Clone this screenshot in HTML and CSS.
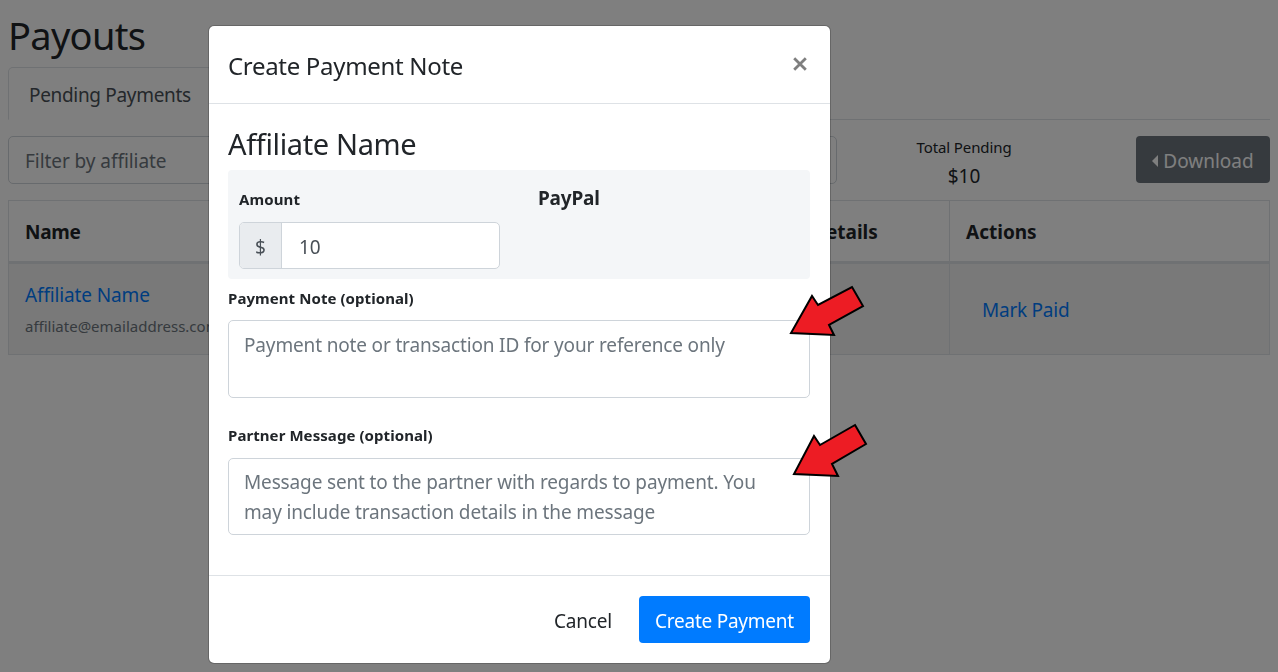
FILE: index.html
```html
<!DOCTYPE html>
<html lang="en">
<head>
<meta charset="utf-8">
<title>Payouts</title>
<link rel="stylesheet" href="styles.css">
</head>
<body>
<main class="page">
  <h1 class="title">Payouts</h1>
  <nav class="tabs"><a class="tab">Pending Payments</a></nav>
  <section class="toolbar">
    <div class="filter">Filter by affiliate</div>
    <div class="total"><span class="total-label">Total Pending</span><span class="total-value">$10</span></div>
    <button class="download"><svg width="6" height="12" viewBox="0 0 6 12"><path d="M6 0v12L0 6z" fill="currentColor"/></svg><span>Download</span></button>
  </section>
  <section class="table">
    <div class="row head"><div class="cell first">Name</div><div class="cell details">Details</div><div class="cell">Actions</div></div>
    <div class="row data">
      <div class="cell person"><a class="link">Affiliate Name</a><span class="email">affiliate@emailaddress.com</span></div>
      <div class="cell"></div>
      <div class="cell action"><a class="link mark">Mark Paid</a></div>
    </div>
  </section>
</main>
<div class="backdrop">
  <div class="modal">
    <header class="modal-head"><h2 class="modal-title">Create Payment Note</h2>
      <svg class="close" width="14" height="14" viewBox="0 0 14 14"><path d="M1.2 1.2l11.6 11.6M12.8 1.2L1.2 12.8" stroke="#7f7f7f" stroke-width="2.8" fill="none"/></svg></header>
    <div class="modal-body">
      <h3 class="name">Affiliate Name</h3>
      <div class="panel">
        <div class="amount"><label class="label amount-label">Amount</label><div class="group"><span class="addon">$</span><span class="value">10</span></div></div>
        <strong class="method">PayPal</strong>
      </div>
      <label class="label note-label">Payment Note (optional)</label>
      <div class="area">Payment note or transaction ID for your reference only</div>
      <label class="label message-label">Partner Message (optional)</label>
      <div class="area second">Message sent to the partner with regards to payment. You<br>may include transaction details in the message</div>
    </div>
    <footer class="modal-foot"><button class="cancel">Cancel</button><button class="create">Create Payment</button></footer>
  </div>
</div>
<svg class="arrows" width="1278" height="672" viewBox="0 0 1278 672">
  <g fill="#ed1c24" stroke="#000" stroke-width="2">
    <path d="M852 287l11 19-34 19 5 10-43-2 21-37 6 9z"/>
    <path d="M855 425l11 19-34 20 6 12-44-2 20-38 6 9z"/>
  </g>
</svg>
</body>
</html>
```
FILE: styles.css
```css
* { box-sizing: border-box; }
body { margin: 0; background: #fff; color: #212529; font: 19px/30px "Noto Sans", sans-serif; height: 672px; overflow: hidden; }
h1, h2, h3 { margin: 0; font-weight: 400; }
button { font: inherit; border: 0; border-radius: 4px; padding: 0; }
.page { padding: 11px 8px 0; }
.title { font-size: 38px; line-height: 48px; letter-spacing: -.7px; }
.tabs { display: flex; margin-top: 8px; height: 53px; border-bottom: 1px solid #dee2e6; }
.tab { height: 53px; padding: 12px 20px; border: 1px solid #dee2e6; border-bottom-color: #fff; border-radius: 5px 5px 0 0; color: #495057; letter-spacing: -.32px; }
.toolbar { display: grid; grid-template-columns: 829px 254px 1fr; align-items: start; margin-top: 16px; height: 48px; }
.filter { height: 48px; border: 1px solid #ced4da; border-radius: 5px; padding: 9px 16px; color: #6c757d; letter-spacing: -.06px; }
.total { display: flex; flex-direction: column; align-items: center; }
.total-label { font-size: 15px; line-height: 22px; letter-spacing: -.1px; }
.total-value { line-height: 36px; }
.download { justify-self: end; width: 134px; display: flex; align-items: center; justify-content: center; gap: 5px; height: 47px; padding-top: 2px; background: #6c757d; color: #fff; }
.table { margin-top: 16px; border: 1px solid #dee2e6; }
.row { display: grid; grid-template-columns: 785px 155px 1fr; }
.head { height: 63px; border-bottom: 3px solid #dee2e6; font-weight: 700; }
.first { letter-spacing: -.3px; }
.data { height: 90px; background: #f2f2f2; }
.cell { padding: 16px 16px 0; border-left: 1px solid #dee2e6; }
.cell:first-child { border-left: 0; }
.head .details { padding-left: 17px; }
.person { display: flex; flex-direction: column; letter-spacing: -.14px; }
.email { font-size: 15px; line-height: 32px; color: #6c757d; letter-spacing: 0; }
.link { color: #007bff; }
.action { padding: 31px 32px 0; }
.mark { letter-spacing: -.25px; }
.backdrop { position: fixed; inset: 0; padding: 25px 0 0 208px; background: rgba(0,0,0,.5); }
.modal { width: 623px; height: 639px; background: #fff; background-clip: padding-box; border: 1px solid rgba(0,0,0,.2); border-radius: 6px; }
.modal-head { display: flex; justify-content: space-between; height: 78px; padding: 21px 23px 0 19px; border-bottom: 1px solid #dee2e6; }
.modal-title { font-size: 24px; line-height: 37px; letter-spacing: -.31px; }
.close { margin-top: 10px; }
.modal-body { height: 471px; padding: 19px 20px 0 19px; }
.name { font-size: 29px; line-height: 42px; margin-bottom: 5px; letter-spacing: -.36px; }
.panel { display: flex; height: 109px; padding: 16px 11px 0; background: #f4f6f8; border-radius: 4px; }
.amount { width: 299px; }
.label { display: block; font-size: 15px; line-height: 26px; font-weight: 700; letter-spacing: .07px; }
.amount-label { letter-spacing: .1px; }
.group { display: flex; width: 261px; height: 47px; margin-top: 10px; border: 1px solid #ced4da; border-radius: 5px; background: #fff; color: #495057; line-height: 48px; overflow: hidden; }
.addon { width: 42px; text-align: center; background: #e9ecef; border-right: 1px solid #ced4da; }
.value { padding-left: 17px; }
.method { line-height: 25px; letter-spacing: -.2px; }
.note-label { margin-top: 6px; }
.area { height: 78px; margin-top: 9px; padding: 9px 15px; border: 1px solid #ced4da; border-radius: 5px; color: #6c757d; white-space: nowrap; letter-spacing: -.155px; }
.message-label { margin-top: 24px; }
.second { height: 77px; margin-top: 10px; padding-top: 8px; letter-spacing: -.145px; }
.modal-foot { display: flex; justify-content: flex-end; gap: 27px; padding: 20px 20px 0; border-top: 1px solid #dee2e6; }
.cancel { height: 47px; padding-top: 2px; background: none; color: #212529; letter-spacing: -.2px; }
.create { width: 171px; height: 47px; padding-top: 2px; background: #007bff; color: #fff; letter-spacing: -.25px; }
.arrows { position: absolute; left: 0; top: 0; }
```
